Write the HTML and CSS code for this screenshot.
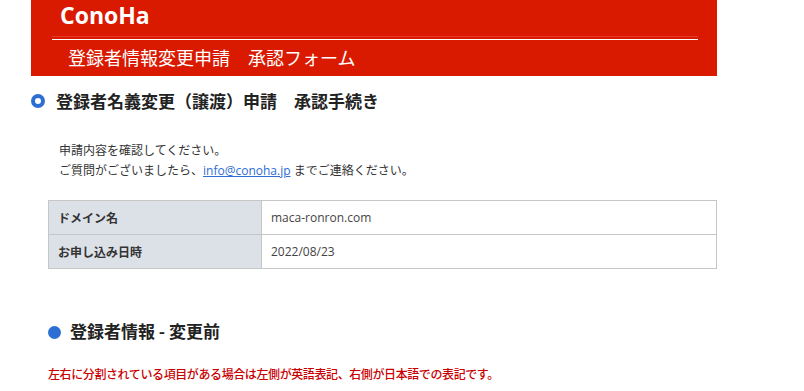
FILE: index.html
```html
<!DOCTYPE html>
<html lang="ja">
<head>
<meta charset="utf-8">
<link rel="stylesheet" href="styles.css">
</head>
<body>
<div class="page">
  <header class="header">
    <div class="brand">ConoHa</div>
    <div class="rule"></div>
    <div class="subtitle">登録者情報変更申請　承認フォーム</div>
  </header>
  <h1 class="h1"><span class="ring"></span>登録者名義変更（譲渡）申請　承認手続き</h1>
  <div class="intro">
    <p>申請内容を確認してください。</p>
    <p>ご質問がございましたら、<a href="#">info@conoha.jp</a> までご連絡ください。</p>
  </div>
  <div class="section">
    <table class="info">
      <tr><th>ドメイン名</th><td>maca-ronron.com</td></tr>
      <tr><th>お申し込み日時</th><td>2022/08/23</td></tr>
    </table>
    <h2 class="h2"><span class="dot"></span>登録者情報 - 変更前</h2>
    <p class="note">左右に分割されている項目がある場合は左側が英語表記、右側が日本語での表記です。</p>
  </div>
</div>
</body>
</html>
```

FILE: styles.css
```css
html, body { margin: 0; padding: 0; background: #fff; }
body {
  font-family: "Open Sans", "Noto Sans CJK JP", sans-serif;
  color: #333;
}
.page { width: 686px; margin-left: 31px; }
.header {
  background: #d91a00;
  height: 76px;
  padding: 0 19px 0 21px;
  box-sizing: border-box;
  color: #fff;
}
.brand {
  padding: 1px 0 0 8px;
  font-size: 23px;
  font-weight: 700;
  line-height: 28px;
  height: 33px;
  box-sizing: border-box;
}
.rule {
  margin-top: 6px;
  height: 1px;
  background: #fff;
  box-shadow: 0 -3px 0 0 rgba(255,120,100,0.35);
}
.subtitle {
  padding: 5px 0 0 16px;
  font-size: 18px;
  line-height: 24px;
  font-family: "Noto Sans CJK JP", sans-serif;
}
.h1 {
  display: flex;
  align-items: center;
  margin: 14px 0 0 0;
  font-size: 17px;
  font-weight: 700;
  color: #222;
  line-height: 22px;
  font-family: "Noto Sans CJK JP", sans-serif;
}
.ring {
  flex-shrink: 0;
  width: 14px; height: 14px;
  border: 4px solid #2d6ed2;
  border-radius: 50%;
  box-sizing: border-box;
  margin-right: 11px;
}
.intro {
  margin: 29px 0 0 28px;
  font-size: 12px;
  line-height: 20px;
  color: #333;
}
.intro p { margin: 0; }
.intro a { color: #2d6ed2; text-decoration: underline; }
.section { margin-left: 17px; }
.info {
  margin-top: 19px;
  width: 669px;
  border-collapse: collapse;
  font-size: 12px;
}
.info th, .info td {
  border: 1px solid #c6c6c6;
  height: 34px;
  padding: 0 9px;
  text-align: left;
  box-sizing: border-box;
}
.info th {
  width: 213px;
  background: #dce1e8;
  font-weight: 700;
  color: #333;
}
.info td { color: #444; }
.h2 {
  display: flex;
  align-items: center;
  margin: 50px 0 0 0;
  font-size: 17px;
  font-weight: 700;
  color: #222;
  line-height: 24px;
  font-family: "Noto Sans CJK JP", sans-serif;
}
.dot {
  flex-shrink: 0;
  width: 13px; height: 13px;
  background: #2d6ed2;
  border-radius: 50%;
  margin-right: 9px;
  margin-top: 3px;
}
.note {
  margin: 24px 0 0 0;
  font-size: 12px;
  line-height: 16px;
  color: #c80000;
  font-weight: 500;
  letter-spacing: -0.4px;
}
```
